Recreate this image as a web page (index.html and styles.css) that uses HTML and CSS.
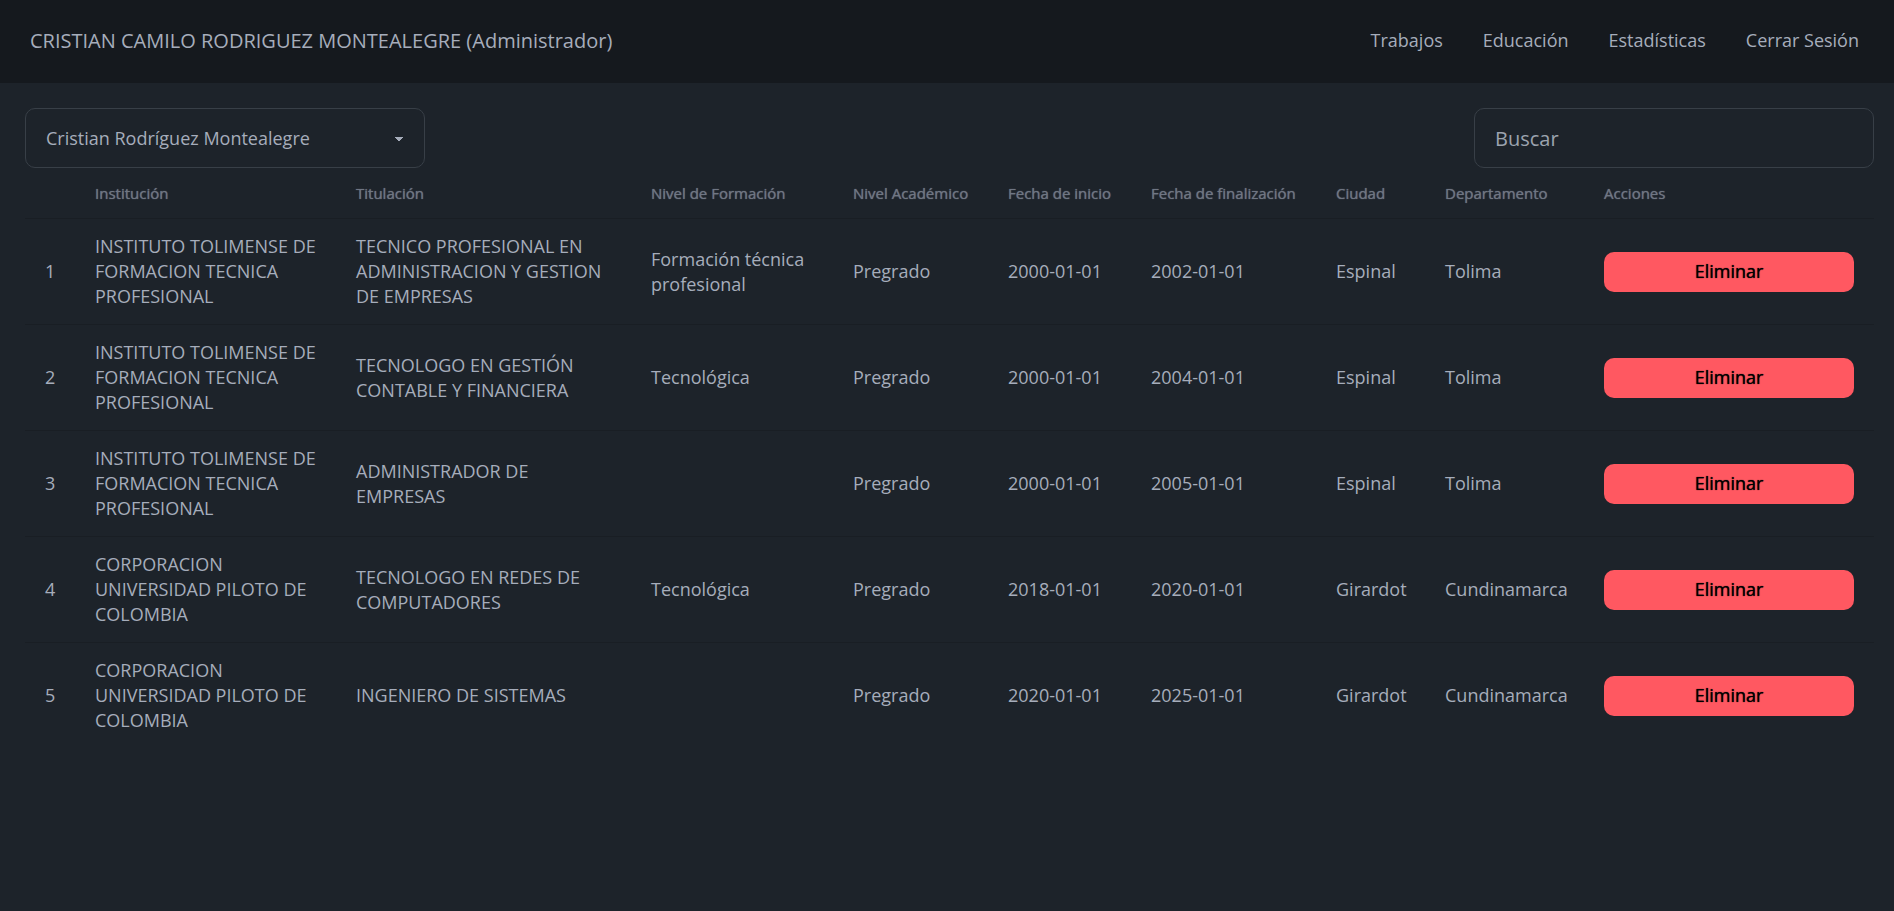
FILE: index.html
```html
<!DOCTYPE html>
<html lang="es">
<head>
  <meta charset="UTF-8" />
  <meta name="viewport" content="width=device-width, initial-scale=1.0"/>
  <title>Educación</title>
  <link rel="stylesheet" href="styles.css">
</head>
<body>

  <header class="navbar">
    <a class="navbar-title" href="#">CRISTIAN CAMILO RODRIGUEZ MONTEALEGRE (Administrador)</a>
    <nav class="menu">
      <a href="#">Trabajos</a>
      <a href="#">Educación</a>
      <a href="#">Estadísticas</a>
      <a href="#">Cerrar Sesión</a>
    </nav>
  </header>

  <main class="content">
    <div class="filters">
      <select class="select" aria-label="Usuario">
        <option>Cristian Rodríguez Montealegre</option>
      </select>
      <input class="input" type="text" placeholder="Buscar" aria-label="Buscar">
    </div>

    <table class="table">
      <colgroup>
        <col class="col-num">
        <col class="col-institucion">
        <col class="col-titulacion">
        <col class="col-formacion">
        <col class="col-academico">
        <col class="col-inicio">
        <col class="col-fin">
        <col class="col-ciudad">
        <col class="col-departamento">
        <col class="col-acciones">
      </colgroup>
      <thead>
        <tr>
          <th></th>
          <th>Institución</th>
          <th>Titulación</th>
          <th>Nivel de Formación</th>
          <th>Nivel Académico</th>
          <th>Fecha de inicio</th>
          <th>Fecha de finalización</th>
          <th>Ciudad</th>
          <th>Departamento</th>
          <th>Acciones</th>
        </tr>
      </thead>
      <tbody>
        <tr>
          <td>1</td>
          <td>INSTITUTO TOLIMENSE DE FORMACION TECNICA PROFESIONAL</td>
          <td>TECNICO PROFESIONAL EN ADMINISTRACION Y GESTION DE EMPRESAS</td>
          <td>Formación técnica profesional</td>
          <td>Pregrado</td>
          <td>2000-01-01</td>
          <td>2002-01-01</td>
          <td>Espinal</td>
          <td>Tolima</td>
          <td><button class="btn-error" type="button">Eliminar</button></td>
        </tr>
        <tr>
          <td>2</td>
          <td>INSTITUTO TOLIMENSE DE FORMACION TECNICA PROFESIONAL</td>
          <td>TECNOLOGO EN GESTIÓN CONTABLE Y FINANCIERA</td>
          <td>Tecnológica</td>
          <td>Pregrado</td>
          <td>2000-01-01</td>
          <td>2004-01-01</td>
          <td>Espinal</td>
          <td>Tolima</td>
          <td><button class="btn-error" type="button">Eliminar</button></td>
        </tr>
        <tr>
          <td>3</td>
          <td>INSTITUTO TOLIMENSE DE FORMACION TECNICA PROFESIONAL</td>
          <td>ADMINISTRADOR DE EMPRESAS</td>
          <td></td>
          <td>Pregrado</td>
          <td>2000-01-01</td>
          <td>2005-01-01</td>
          <td>Espinal</td>
          <td>Tolima</td>
          <td><button class="btn-error" type="button">Eliminar</button></td>
        </tr>
        <tr>
          <td>4</td>
          <td>CORPORACION UNIVERSIDAD PILOTO DE COLOMBIA</td>
          <td>TECNOLOGO EN REDES DE COMPUTADORES</td>
          <td>Tecnológica</td>
          <td>Pregrado</td>
          <td>2018-01-01</td>
          <td>2020-01-01</td>
          <td>Girardot</td>
          <td>Cundinamarca</td>
          <td><button class="btn-error" type="button">Eliminar</button></td>
        </tr>
        <tr>
          <td>5</td>
          <td>CORPORACION UNIVERSIDAD PILOTO DE COLOMBIA</td>
          <td>INGENIERO DE SISTEMAS</td>
          <td></td>
          <td>Pregrado</td>
          <td>2020-01-01</td>
          <td>2025-01-01</td>
          <td>Girardot</td>
          <td>Cundinamarca</td>
          <td><button class="btn-error" type="button">Eliminar</button></td>
        </tr>
      </tbody>
    </table>
  </main>

</body>
</html>
```
FILE: styles.css
```css
* {
  box-sizing: border-box;
}

body {
  margin: 0;
  background-color: #1d232a;
  color: #a6adbb;
  font-family: "Open Sans", sans-serif;
  font-size: 18px;
  line-height: 25px;
}

/* Barra superior */
.navbar {
  display: flex;
  justify-content: space-between;
  align-items: center;
  padding: 28px 35px 30px 30px;
  background-color: #15191e;
}

.navbar a {
  color: inherit;
  text-decoration: none;
}

.navbar-title {
  font-size: 20px;
}

.menu {
  display: flex;
  gap: 40px;
}

.content {
  padding: 25px 20px 25px 25px;
}

/* Filtros */
.filters {
  display: flex;
  justify-content: space-between;
  gap: 20px;
}

.select,
.input {
  width: 400px;
  height: 60px;
  padding: 0 20px;
  border: 1px solid #383f47;
  border-radius: 10px;
  background-color: #1d232a;
  color: inherit;
  font-family: inherit;
}

.select {
  appearance: none;
  padding-right: 50px;
  font-size: 18px;
  background-image:
    linear-gradient(45deg, transparent 50%, currentColor 50%),
    linear-gradient(135deg, currentColor 50%, transparent 50%);
  background-position:
    calc(100% - 25px) calc(50% + 1px),
    calc(100% - 20px) calc(50% + 1px);
  background-size: 5px 4px;
  background-repeat: no-repeat;
}

.input {
  font-size: 20px;
}

.input::placeholder {
  color: #9ca3af;
}

/* Tabla de estudios */
.table {
  width: 100%;
  table-layout: fixed;
  border-spacing: 0;
  text-align: left;
}

.table th,
.table td {
  padding: 15px 20px;
  vertical-align: middle;
}

.table th {
  padding: 13px 20px 12px;
  font-size: 15px;
  font-weight: normal;
  color: #6f7683;
  text-shadow: 0 0 1px currentColor;
  white-space: nowrap;
}

.table th,
.table tr:not(:last-child) td {
  border-bottom: 1px solid #191e24;
}

.col-num { width: 50px; }
.col-institucion { width: 261px; }
.col-formacion { width: 202px; }
.col-academico { width: 155px; }
.col-inicio { width: 143px; }
.col-fin { width: 185px; }
.col-ciudad { width: 109px; }
.col-departamento { width: 159px; }
.col-acciones { width: 290px; }

.btn-error {
  display: block;
  width: 100%;
  height: 40px;
  padding: 0 15px 1px;
  border: none;
  border-radius: 10px;
  background-color: #ff5861;
  color: #000;
  font-family: inherit;
  font-size: 18px;
  text-shadow: 0 0 1px currentColor;
  cursor: pointer;
}
```
